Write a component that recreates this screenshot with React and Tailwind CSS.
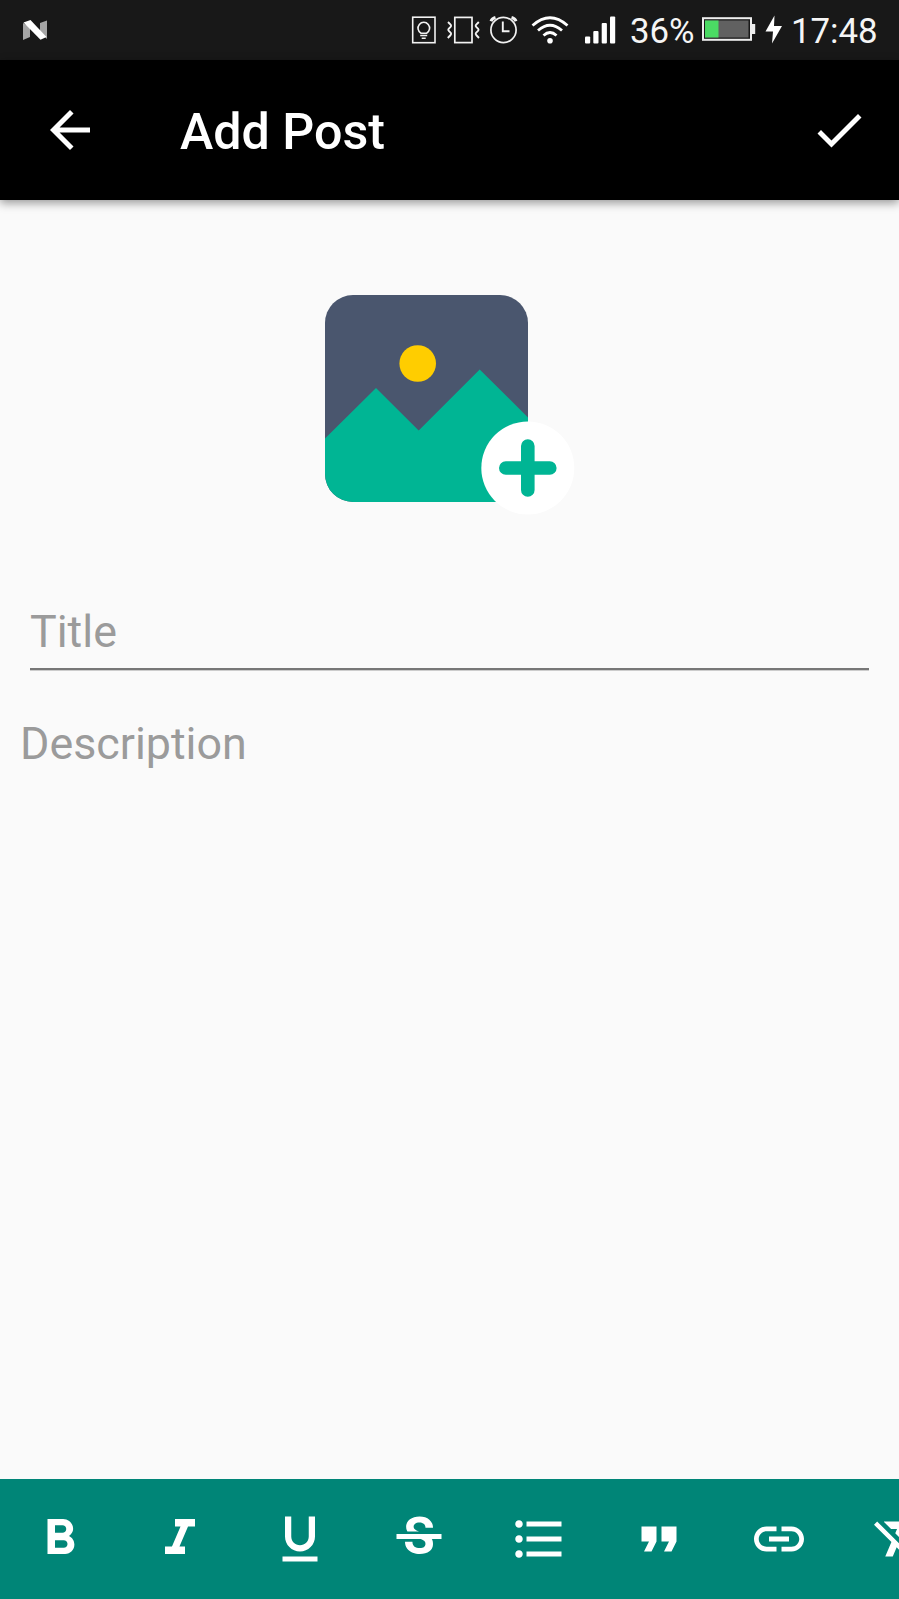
const TOOLS = [
  { name: 'Bold', d: 'M15.6 10.79c.97-.67 1.65-1.77 1.65-2.79 0-2.26-1.75-4-4-4H7v14h7.04c2.09 0 3.71-1.7 3.71-3.79 0-1.52-.86-2.82-2.15-3.42zM10 6.5h3c.83 0 1.5.67 1.5 1.5s-.67 1.5-1.5 1.5h-3v-3zm3.5 9H10v-3h3.5c.83 0 1.5.67 1.5 1.5s-.67 1.5-1.5 1.5z' },
  { name: 'Italic', d: 'M10 4v3h2.21l-3.42 8H6v3h8v-3h-2.21l3.42-8H18V4z' },
  { name: 'Underline', d: 'M12 17c3.31 0 6-2.69 6-6V3h-2.5v8c0 1.93-1.57 3.5-3.5 3.5S8.5 12.93 8.5 11V3H6v8c0 3.31 2.69 6 6 6zm-7 2v2h14v-2H5z' },
  { name: 'Strikethrough', d: 'M7.24 8.75c-.26-.48-.39-1.03-.39-1.67 0-.61.13-1.16.4-1.67.26-.5.63-.93 1.11-1.29.48-.35 1.05-.63 1.7-.83.66-.19 1.39-.29 2.18-.29.81 0 1.54.11 2.21.34.66.22 1.23.54 1.69.94.47.4.83.88 1.08 1.43s.38 1.15.38 1.81h-3.01c0-.31-.05-.59-.15-.85-.09-.27-.24-.49-.44-.68-.2-.19-.45-.33-.75-.44-.3-.1-.66-.16-1.06-.16-.39 0-.74.04-1.03.13s-.53.21-.72.36c-.19.16-.34.34-.44.55-.1.21-.15.43-.15.66 0 .48.25.88.74 1.21.38.25.77.48 1.41.7H7.39c-.05-.08-.11-.17-.15-.25zM21 12v-2H3v2h9.62c.18.07.4.14.55.2.37.17.66.34.87.51s.35.36.43.57c.07.2.11.43.11.69 0 .23-.05.45-.14.66-.09.2-.23.38-.42.53-.19.15-.42.26-.71.35-.29.08-.63.13-1.01.13-.43 0-.83-.04-1.18-.13s-.66-.23-.91-.42c-.25-.19-.45-.44-.59-.75s-.25-.76-.25-1.21H6.4c0 .55.08 1.13.24 1.58s.37.85.65 1.21c.28.35.6.66.98.92.37.26.78.48 1.22.65.44.17.9.3 1.38.39.48.08.96.13 1.44.13.8 0 1.53-.09 2.18-.28s1.21-.45 1.67-.79c.46-.34.82-.77 1.07-1.27s.38-1.07.38-1.71c0-.6-.1-1.14-.31-1.61-.05-.11-.11-.23-.17-.33H21z' },
  { name: 'Bulleted list', d: 'M4 10.5c-.83 0-1.5.67-1.5 1.5s.67 1.5 1.5 1.5 1.5-.67 1.5-1.5-.67-1.5-1.5-1.5zm0-6c-.83 0-1.5.67-1.5 1.5S3.17 7.5 4 7.5 5.5 6.83 5.5 6 4.83 4.5 4 4.5zm0 12c-.83 0-1.5.68-1.5 1.5s.68 1.5 1.5 1.5 1.5-.68 1.5-1.5-.67-1.5-1.5-1.5zM7 19h14v-2H7v2zm0-6h14v-2H7v2zm0-8v2h14V5H7z' },
  { name: 'Quote', d: 'M6 17h3l2-4V7H5v6h3zm8 0h3l2-4V7h-6v6h3z' },
  { name: 'Link', d: 'M3.9 12c0-1.71 1.39-3.1 3.1-3.1h4V7H7c-2.76 0-5 2.24-5 5s2.24 5 5 5h4v-1.9H7c-1.71 0-3.1-1.39-3.1-3.1zM8 13h8v-2H8v2zm9-6h-4v1.9h4c1.71 0 3.1 1.39 3.1 3.1s-1.39 3.1-3.1 3.1h-4V17h4c2.76 0 5-2.24 5-5s-2.24-5-5-5z' },
  { name: 'Clear formatting', d: 'M3.27 5L2 6.27l6.97 6.97L6.5 19h3l1.57-3.66L16.73 21 18 19.73 3.55 5.27 3.27 5zM6 5v.18L8.82 8h2.4l-.72 1.68 2.1 2.1L14.21 8H20V5H6z' },
];

function Icon({ d }) {
  return (
    <svg viewBox="0 0 24 24" className="size-[60px] shrink-0 fill-white">
      <path d={d} />
    </svg>
  );
}

function StatusBar() {
  return (
    <div className="flex h-[60px] shrink-0 items-center bg-[#181818] pl-[22px] pr-[19px] text-[34.8px] text-[#f5f5f5]">
      <svg viewBox="22 0 26 60" className="h-[60px] w-[26px] shrink-0">
        <path d="M23 23v17l7-3V27zM47 20.500l-7 2.500v9l7 7z" fill="#a5a5a5" />
        <path d="M23.500 22.500l7-2.500L46.500 37l-6 2.800z" fill="#fff" />
      </svg>
      <div className="ml-auto flex h-[60px] items-center">
        <svg viewBox="411 0 26 60" className="h-[60px] w-[26px]" fill="none" stroke="#f2f2f2" strokeWidth="1.600">
          <rect x="412.700" y="17.200" width="22.300" height="25.500" />
          <path d="M421 33.200a5.800 5.800 0 1 1 5.600 0zM420.200 35.500h7M421.700 38.200h4" />
        </svg>
        <svg viewBox="446 0 35 60" className="ml-[9px] h-[60px] w-[35px]" fill="none" stroke="#f2f2f2" strokeWidth="1.700">
          <rect x="454.800" y="17.400" width="17.200" height="25.200" />
          <path d="M448 22l2.800 2.800q.8 1-.2 2l-2 2q-.8 1 .2 2l2 2q.8 1-.2 2.200L447.800 38M478.800 22l-2.800 2.800q-.8 1 .2 2l2 2q.8 1-.2 2l-2 2q-.8 1 .2 2.200L479 38" strokeWidth="1.900" />
        </svg>
        <svg viewBox="489 0 29 60" className="ml-2 h-[60px] w-[29px]" fill="none" stroke="#f2f2f2" strokeWidth="1.700">
          <circle cx="503.500" cy="30" r="12.600" />
          <path d="M502.800 21.500v9.700h6.700" strokeWidth="1.900" />
          <path d="M491 21.200q1-2.700 4.500-3.700M516 21.200q-1-2.700-4.500-3.700" strokeWidth="3" />
        </svg>
        <svg viewBox="531 0 38 60" className="ml-[13px] h-[60px] w-[38px]" fill="none" stroke="#fff" strokeWidth="2.800">
          <path d="M532.500 25.500q17.500-15.500 35 0M538 30.500q12-10.500 24 0M543.500 35.500q6.500-6 13 0" />
          <circle cx="550" cy="40.800" r="2.800" fill="#fff" stroke="none" />
        </svg>
        <svg viewBox="584 0 32 60" className="ml-[15px] h-[60px] w-[32px]" fill="#fff">
          <rect x="585" y="36.500" width="5.200" height="7" rx="1" />
          <rect x="593.300" y="31" width="5.200" height="12.500" rx="1" />
          <rect x="601.700" y="23" width="5.200" height="20.500" rx="1" />
          <rect x="610" y="16.500" width="5.200" height="27" rx="1" />
        </svg>
        <span className="ml-[14px] w-[71px] whitespace-nowrap pt-[2px] leading-[62px]">36%</span>
        <svg viewBox="701 0 55 60" className="h-[60px] w-[55px]">
          <rect x="703" y="18.200" width="48" height="21.600" fill="none" stroke="#eee" strokeWidth="2" />
          <rect x="705" y="20.500" width="43.500" height="17" fill="#616161" />
          <rect x="705" y="20.500" width="13.500" height="17" fill="#4bdb64" />
          <rect x="752" y="24" width="3.200" height="10" fill="#eee" />
        </svg>
        <svg viewBox="764 0 19 60" className="ml-2 h-[60px] w-[19px]" fill="#fff">
          <path d="M774.500 15.500L765.500 31.500h7.500L772 43.500l10-17.500h-8z" />
        </svg>
        <span className="ml-[8px] w-[89px] whitespace-nowrap pt-[2px] leading-[62px]">17:48</span>
      </div>
    </div>
  );
}

function AddPhoto() {
  return (
    <svg viewBox="0 0 250 220" className="ml-[324.500px] mt-[95px] h-[220px] w-[250px] shrink-0">
      <defs>
        <clipPath id="photo">
          <rect width="203" height="207" rx="28" />
        </clipPath>
      </defs>
      <g clipPath="url(#photo)">
        <rect width="203" height="207" fill="#4a566e" />
        <path d="M0 143.500L51 93 93.700 135.500 154.700 74.500 203 122.500V207H0z" fill="#00b594" />
      </g>
      <circle cx="92.700" cy="68.500" r="18.300" fill="#ffcd00" />
      <circle cx="202.800" cy="173" r="46.500" fill="#fff" />
      <path d="M202.800 151v44M180.800 173h44" stroke="#00b594" strokeWidth="13.600" strokeLinecap="round" />
    </svg>
  );
}

export default function App() {
  return (
    <div className="flex h-[1599px] w-[899px] flex-col overflow-hidden bg-[#fafafa] font-['Roboto',sans-serif]">
      <StatusBar />
      <header className="flex h-[140px] shrink-0 items-center bg-black pl-10 pr-[30px] text-white shadow-[0_3px_9px_rgba(0,0,0,0.4)]">
        <Icon d="M20 11H7.830l5.590-5.590L12 4l-8 8 8 8 1.410-1.410L7.830 13H20v-2z" />
        <h1 className="ml-20 pt-[4px] text-[50.200px] font-medium leading-[64px]">Add Post</h1>
        <div className="ml-auto flex">
          <Icon d="M9 16.200L4.800 12l-1.400 1.400L9 19 21 7l-1.400-1.400L9 16.200z" />
        </div>
      </header>
      <main className="flex grow flex-col">
        <AddPhoto />
        <div className="mx-[30px] mt-[77px] flex h-[78px] items-center border-b-2 border-[#777] pt-[4px] text-[44.800px] text-[#9b9b9b] shadow-[0_1px_0_#cccccc]">
          Title
        </div>
        <div className="ml-5 mt-[47px] text-[44.800px] leading-[53px] text-[#9b9b9b]">Description</div>
      </main>
      <nav className="flex h-[120px] shrink-0 overflow-hidden bg-[#008577]">
        {TOOLS.map((tool) => (
          <button key={tool.name} aria-label={tool.name} className="flex w-[119.850px] shrink-0 items-center justify-center">
            <Icon d={tool.d} />
          </button>
        ))}
      </nav>
    </div>
  );
}
